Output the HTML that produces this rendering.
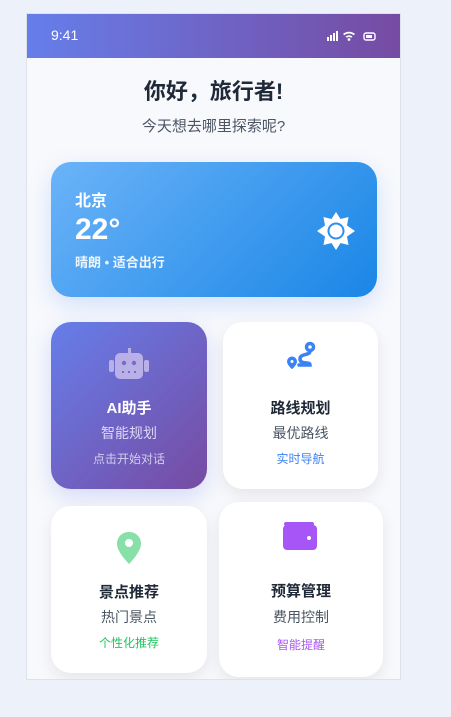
<!DOCTYPE html><html><head><meta charset="utf-8"><style>
*{margin:0;padding:0;box-sizing:border-box}
body{width:451px;height:717px;background:#edf1f9;font-family:"Liberation Sans","Noto Sans CJK SC",sans-serif;position:relative;overflow:hidden}
.phone{position:absolute;left:26px;top:13px;width:375px;height:667px;background:#f8f9fc;border:1px solid #dde2ea;overflow:hidden}
.sb{height:44px;background:linear-gradient(90deg,#667eea,#764ba2);color:#fff;position:relative}
.sb .t{position:absolute;left:24px;top:13px;font-size:14px}
.c{position:absolute;text-align:center}
.card{position:absolute;border-radius:20px;background:#fff;box-shadow:0 6px 16px rgba(0,0,0,.08);text-align:center}
.card .i{position:absolute;left:0;right:0}
.card .h{position:absolute;left:0;right:0;font-size:15px;font-weight:bold;color:#1f2937}
.card .s{position:absolute;left:0;right:0;font-size:14px;color:#4b5563}
.card .m{position:absolute;left:0;right:0;font-size:12px}
</style></head><body>
<div class="phone">
<div class="sb"><span class="t">9:41</span>
<svg style="position:absolute;left:299px;top:15px" width="50" height="14" viewBox="0 0 50 14" fill="#fff">
<rect x="1" y="8" width="2" height="4"/><rect x="4" y="6" width="2" height="6"/><rect x="7" y="4" width="2" height="8"/><rect x="10" y="2" width="2" height="10"/>
<path d="M17 5a9 9 0 0 1 12 0l-1.3 1.3a7 7 0 0 0-9.4 0z M19.5 7.5a5.5 5.5 0 0 1 7 0l-1.3 1.3a3.5 3.5 0 0 0-4.4 0z"/><circle cx="23" cy="10.5" r="1.4"/>
<rect x="38" y="4" width="11" height="7" rx="2" fill="none" stroke="#fff" stroke-width="1.4"/><rect x="40" y="6" width="6" height="3"/></svg>
</div>
<div class="c" style="left:0;right:0;top:60px;font-size:22px;font-weight:bold;color:#1f2937">你好，旅行者!</div>
<div class="c" style="left:0;right:0;top:101px;font-size:15px;color:#4b5563">今天想去哪里探索呢?</div>
<div style="position:absolute;left:24px;top:148px;width:326px;height:135px;border-radius:20px;background:linear-gradient(135deg,#6bb3f8,#1a86e6);box-shadow:0 8px 24px rgba(59,130,246,.2);color:#fff">
<div style="position:absolute;left:24px;top:25px;font-size:16px;font-weight:bold">北京</div>
<div style="position:absolute;left:24px;top:51px;font-size:30px;font-weight:bold">22°</div>
<div style="position:absolute;left:24px;top:90px;font-size:13px;font-weight:bold;opacity:.9">晴朗 • 适合出行</div>
<svg style="position:absolute;left:266px;top:50px" width="38" height="38" viewBox="0 0 38 38"><polygon fill="#fff" points="19,0 23.5,7 31.5,5 30,13.5 38,19 30,24.5 31.5,33 23.5,31 19,38 14.5,31 6.5,33 8,24.5 0,19 8,13.5 6.5,5 14.5,7"/><circle cx="19" cy="19" r="8.5" fill="#2d8ff0"/><circle cx="19" cy="19" r="6.5" fill="#fff"/></svg>
</div>
<div class="card" style="left:24px;top:308px;width:156px;height:167px;background:linear-gradient(135deg,#667eea,#764ba2);box-shadow:0 8px 22px rgba(102,126,234,.25)">
<svg class="i" style="left:58px;top:26px" width="40" height="34" viewBox="0 0 40 34" fill="#b8b0e6"><rect x="19" y="0" width="3" height="6"/><rect x="6" y="5" width="28" height="26" rx="5"/><rect x="0" y="12" width="5" height="12" rx="2"/><rect x="35" y="12" width="5" height="12" rx="2"/><circle cx="15" cy="15" r="2.2" fill="#7a6cc4"/><circle cx="25" cy="15" r="2.2" fill="#7a6cc4"/><rect x="13" y="23" width="2" height="2" fill="#7a6cc4"/><rect x="19" y="23" width="2" height="2" fill="#7a6cc4"/><rect x="25" y="23" width="2" height="2" fill="#7a6cc4"/></svg>
<div class="h" style="top:75px;color:#fff">AI助手</div>
<div class="s" style="top:101px;color:#ddd8f5">智能规划</div>
<div class="m" style="top:128px;color:#d3cdef">点击开始对话</div>
</div>
<div class="card" style="left:196px;top:308px;width:155px;height:167px">
<svg class="i" style="left:62px;top:18px" width="32" height="32" viewBox="0 0 32 32" fill="none" stroke="#3b82f6" stroke-width="3.5" stroke-linecap="round"><circle cx="25" cy="7" r="3.5"/><path d="M25 11c0 5-10 2-10 8s10 2 10 6h-11"/><path d="M7 17a4.5 4.5 0 0 1 4.5 4.5c0 3-4.5 7-4.5 7s-4.5-4-4.5-7A4.5 4.5 0 0 1 7 17z" fill="#3b82f6" stroke-width="1"/><circle cx="7" cy="21.5" r="1.5" fill="#fff" stroke="none"/></svg>
<div class="h" style="top:75px">路线规划</div>
<div class="s" style="top:101px">最优路线</div>
<div class="m" style="top:128px;color:#3b82f6">实时导航</div>
</div>
<div class="card" style="left:24px;top:492px;width:156px;height:167px">
<svg class="i" style="left:66px;top:26px" width="24" height="32" viewBox="0 0 24 32"><path d="M12 0C5 0 0 5 0 12c0 8 12 20 12 20s12-12 12-20C24 5 19 0 12 0z" fill="#86e0a8"/><circle cx="12" cy="11" r="4" fill="#fff"/></svg>
<div class="h" style="top:75px">景点推荐</div>
<div class="s" style="top:101px">热门景点</div>
<div class="m" style="top:128px;color:#22c55e">个性化推荐</div>
</div>
<div class="card" style="left:192px;top:488px;width:164px;height:175px">
<svg class="i" style="left:64px;top:20px" width="34" height="28" viewBox="0 0 34 28"><rect x="1" y="0" width="30" height="4" rx="2" fill="#a855f7"/><rect x="0" y="3" width="34" height="25" rx="4" fill="#a855f7"/><circle cx="26" cy="16" r="2" fill="#fff"/></svg>
<div class="h" style="top:78px">预算管理</div>
<div class="s" style="top:105px">费用控制</div>
<div class="m" style="top:134px;color:#a855f7">智能提醒</div>
</div>
</div>
</body></html>
